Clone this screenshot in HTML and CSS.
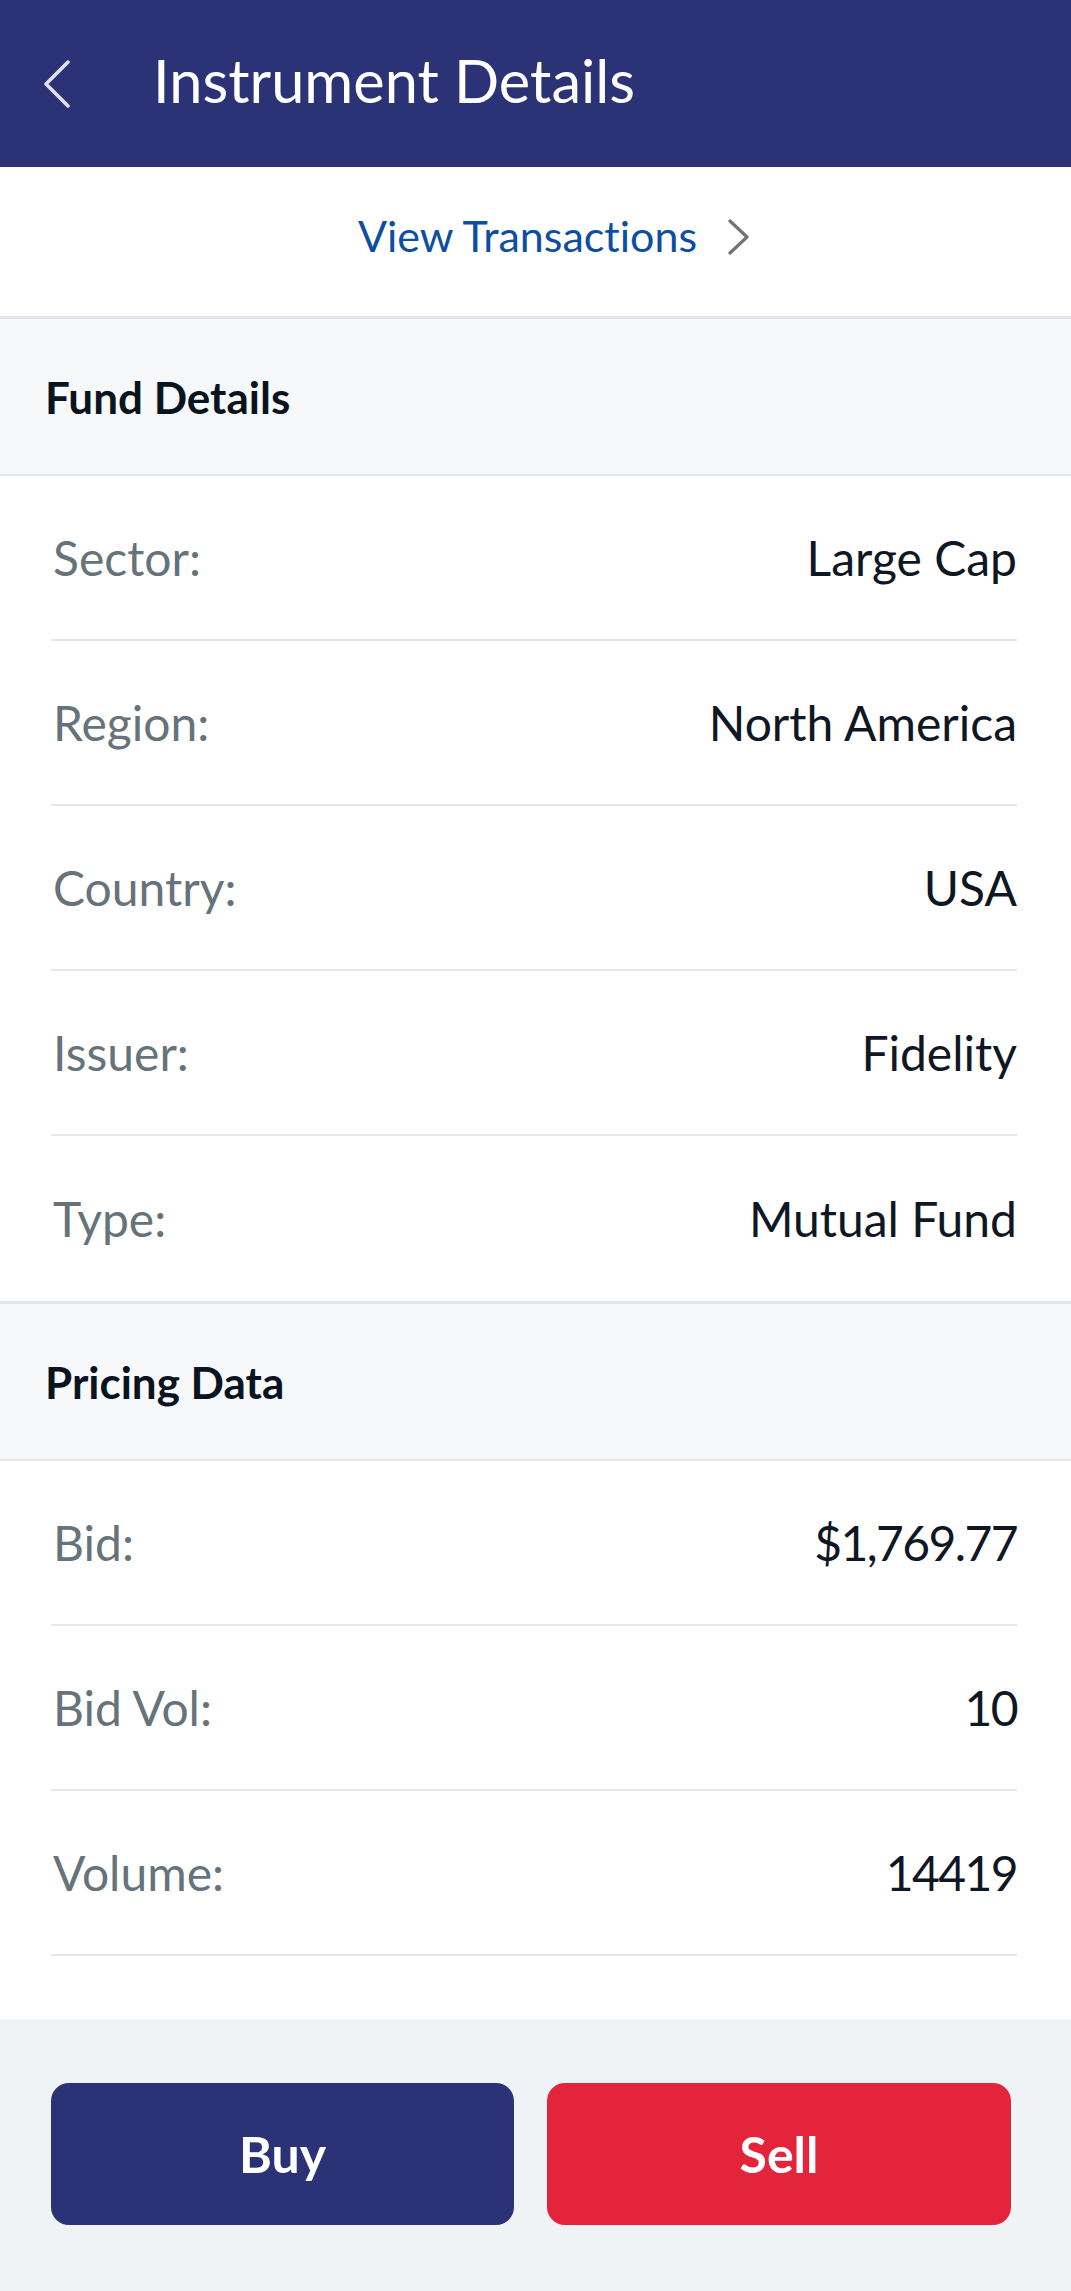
FILE: index.html
```html
<!DOCTYPE html>
<html lang="en">
<head>
<meta charset="utf-8">
<title>Instrument Details</title>
<link rel="stylesheet" href="styles.css">
</head>
<body>
<div class="screen">
  <header class="topbar">
    <svg class="back" width="26" height="48" viewBox="0 0 26 48" aria-hidden="true">
      <polyline points="24,2 2,24 24,46" fill="none" stroke="#e2e2ec" stroke-width="3.5" stroke-linecap="round" stroke-linejoin="round"/>
    </svg>
    <h1 class="title">Instrument Details</h1>
  </header>

  <div class="linkrow">
    <span class="link">View Transactions</span>
    <svg class="fwd" width="24" height="36" viewBox="0 0 24 36" aria-hidden="true">
      <polyline points="3,2 20,18 3,34" fill="none" stroke="#727278" stroke-width="3.2" stroke-linecap="round" stroke-linejoin="round"/>
    </svg>
  </div>

  <section class="group">
    <div class="group-head">Fund Details</div>
    <div class="rows">
      <div class="row"><span class="label">Sector:</span><span class="value">Large Cap</span></div>
      <div class="row"><span class="label">Region:</span><span class="value">North America</span></div>
      <div class="row"><span class="label">Country:</span><span class="value">USA</span></div>
      <div class="row"><span class="label">Issuer:</span><span class="value">Fidelity</span></div>
      <div class="row last"><span class="label">Type:</span><span class="value">Mutual Fund</span></div>
    </div>
  </section>

  <section class="group">
    <div class="group-head">Pricing Data</div>
    <div class="rows rows-pad">
      <div class="row"><span class="label">Bid:</span><span class="value num">$1,769.77</span></div>
      <div class="row"><span class="label">Bid Vol:</span><span class="value num">10</span></div>
      <div class="row"><span class="label">Volume:</span><span class="value num">14419</span></div>
    </div>
  </section>

  <footer class="actions">
    <button class="btn btn-buy">Buy</button>
    <button class="btn btn-sell">Sell</button>
  </footer>
</div>
</body>
</html>
```

FILE: styles.css
```css
* { box-sizing: border-box; }

html, body {
  margin: 0;
  padding: 0;
  background: #ffffff;
}

body {
  font-family: "Lato", "Noto Sans", "Liberation Sans", sans-serif;
  font-variant-ligatures: no-common-ligatures;
  color: #0f1724;
}

.screen {
  width: 1071px;
  min-height: 2291px;
  display: flex;
  flex-direction: column;
}

.topbar {
  height: 167px;
  background: #2b3275;
  display: flex;
  align-items: center;
  padding-left: 44px;
}

.back {
  display: block;
  flex: none;
}

.title {
  margin: -6px 0 0 83px;
  font-size: 59.5px;
  font-weight: 400;
  color: #ffffff;
  line-height: 1;
}

.linkrow {
  height: 149px;
  display: flex;
  align-items: center;
  justify-content: center;
  gap: 30px;
  padding: 0 0 12px 38px;
}

.link {
  font-size: 43px;
  color: #0d4ea3;
  line-height: 1;
}

.fwd {
  display: block;
  margin-top: 2px;
}

.group-head {
  height: 160px;
  background: #f7f8f9;
  border-top: 3px solid #dfe5eb;
  border-bottom: 2px solid #e3e8ed;
  display: flex;
  align-items: center;
  padding-left: 45px;
  font-size: 44px;
  font-weight: 700;
  color: #0a1420;
}

.rows {
  padding: 0 54px 0 51px;
}

.rows-pad {
  padding-bottom: 63px;
}

.row {
  height: 165px;
  display: flex;
  align-items: center;
  justify-content: space-between;
  border-bottom: 2px solid #e5e8eb;
  font-size: 48px;
  line-height: 1;
}

.row.last {
  border-bottom: none;
}

.label {
  color: #66737b;
  padding-left: 2px;
}

.value {
  color: #0f1724;
}

.value.num {
  letter-spacing: -1.6px;
}

.actions {
  flex: 1;
  background: #eff3f6;
  display: grid;
  grid-template-columns: 463px 464px;
  column-gap: 33px;
  align-content: start;
  padding: 64px 0 0 51px;
}

.btn {
  height: 142px;
  border: none;
  border-radius: 18px;
  font-family: "Lato", "Noto Sans", "Liberation Sans", sans-serif;
  font-size: 50px;
  font-weight: 700;
  color: #ffffff;
  padding: 0;
}

.btn-buy { background: #2b3275; }
.btn-sell { background: #e4243a; }
```
